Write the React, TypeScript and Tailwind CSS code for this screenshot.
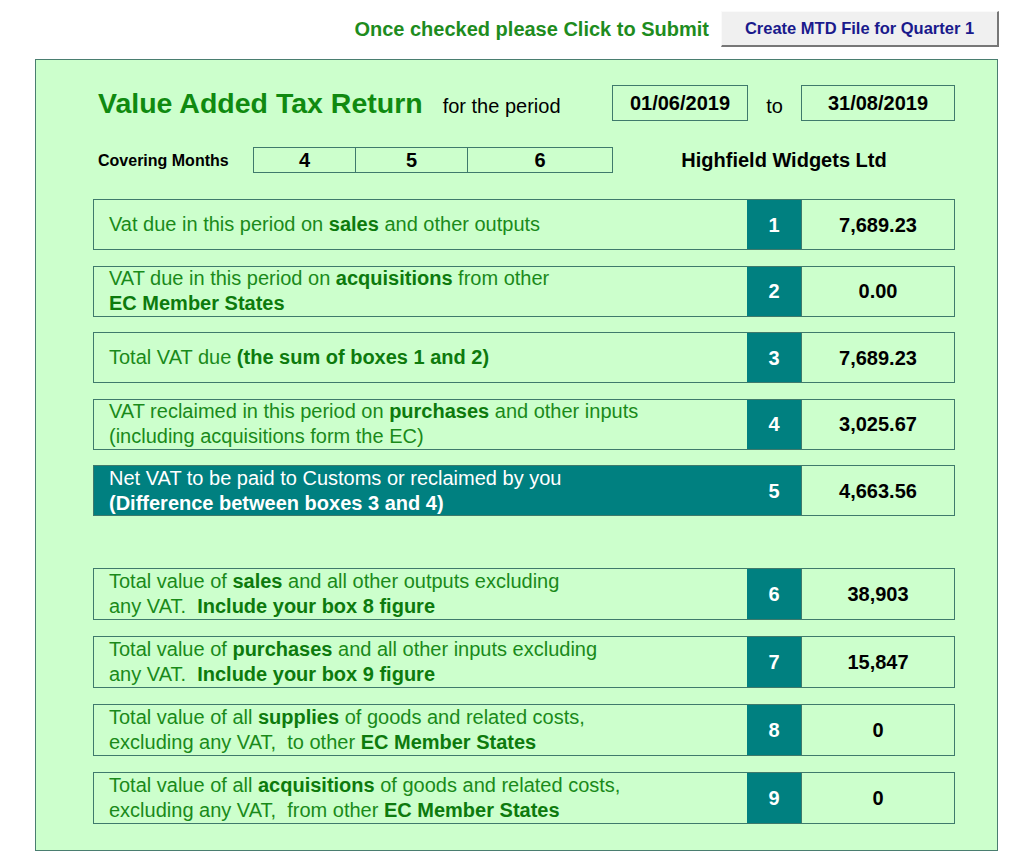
import React from 'react';

const FONT = { fontFamily: '"Liberation Sans", Arial, sans-serif' };

type Line = { text: string; bold?: boolean }[];

interface BoxRow {
  box: number;
  lines: Line[];
  value: string;
  highlight?: boolean;
}

const firstGroup: BoxRow[] = [
  {
    box: 1,
    lines: [[{ text: 'Vat due in this period on ' }, { text: 'sales', bold: true }, { text: ' and other outputs' }]],
    value: '7,689.23',
  },
  {
    box: 2,
    lines: [
      [{ text: 'VAT due in this period on ' }, { text: 'acquisitions', bold: true }, { text: ' from other' }],
      [{ text: 'EC Member States', bold: true }],
    ],
    value: '0.00',
  },
  {
    box: 3,
    lines: [[{ text: 'Total VAT due ' }, { text: '(the sum of boxes 1 and 2)', bold: true }]],
    value: '7,689.23',
  },
  {
    box: 4,
    lines: [
      [{ text: 'VAT reclaimed in this period on ' }, { text: 'purchases', bold: true }, { text: ' and other inputs' }],
      [{ text: '(including acquisitions form the EC)' }],
    ],
    value: '3,025.67',
  },
  {
    box: 5,
    lines: [
      [{ text: 'Net VAT to be paid to Customs or reclaimed by you' }],
      [{ text: '(Difference between boxes 3 and 4)', bold: true }],
    ],
    value: '4,663.56',
    highlight: true,
  },
];

const secondGroup: BoxRow[] = [
  {
    box: 6,
    lines: [
      [{ text: 'Total value of ' }, { text: 'sales', bold: true }, { text: ' and all other outputs excluding' }],
      [{ text: 'any VAT.  ' }, { text: 'Include your box 8 figure', bold: true }],
    ],
    value: '38,903',
  },
  {
    box: 7,
    lines: [
      [{ text: 'Total value of ' }, { text: 'purchases', bold: true }, { text: ' and all other inputs excluding' }],
      [{ text: 'any VAT.  ' }, { text: 'Include your box 9 figure', bold: true }],
    ],
    value: '15,847',
  },
  {
    box: 8,
    lines: [
      [{ text: 'Total value of all ' }, { text: 'supplies', bold: true }, { text: ' of goods and related costs,' }],
      [{ text: 'excluding any VAT,  to other ' }, { text: 'EC Member States', bold: true }],
    ],
    value: '0',
  },
  {
    box: 9,
    lines: [
      [{ text: 'Total value of all ' }, { text: 'acquisitions', bold: true }, { text: ' of goods and related costs,' }],
      [{ text: 'excluding any VAT,  from other ' }, { text: 'EC Member States', bold: true }],
    ],
    value: '0',
  },
];

function VatRow({ row, tall }: { row: BoxRow; tall?: boolean }) {
  return (
    <div className={`flex border border-[#3f7a6c] ${tall ? 'h-[52px]' : 'h-[51px]'}`}>
      <div
        className={`flex-1 flex flex-col justify-center pl-[15px] text-[20px] leading-[25px] ${
          row.highlight ? 'bg-[#008080] text-white' : 'text-[#1a8a1a]'
        }`}
      >
        {row.lines.map((line, i) => (
          <div key={i} className="whitespace-pre">
            {line.map((part, j) => (
              <span key={j} className={part.bold ? `font-bold ${row.highlight ? '' : 'text-[#0d7a0d]'}` : ''}>
                {part.text}
              </span>
            ))}
          </div>
        ))}
      </div>
      <div className="w-[54px] bg-[#008080] text-white font-bold text-[20px] flex items-center justify-center">
        {row.box}
      </div>
      <div className="w-[153px] border-l border-[#3f7a6c] flex items-center justify-center font-bold text-[20px] text-black">
        {row.value}
      </div>
    </div>
  );
}

export default function App() {
  return (
    <div className="w-[1028px] h-[865px] bg-white" style={FONT}>
      {/* submit bar */}
      <div className="flex items-center justify-end pt-[11px] pr-[29px] gap-[12px]">
        <span className="text-[20px] font-bold text-[#1e8c1e]">Once checked please Click to Submit</span>
        <button className="w-[278px] h-[36px] bg-[#f0f0f0] border-t border-l border-t-[#fafafa] border-l-[#fafafa] border-r-2 border-b-2 border-r-[#777] border-b-[#777] text-[16.5px] font-bold text-[#1a1a8c]">
          Create MTD File for Quarter 1
        </button>
      </div>

      {/* main panel */}
      <div className="ml-[35px] mt-[12px] w-[963px] h-[792px] bg-[#ccffcc] border border-[#4a7e70] pl-[57px] pr-[42px] pt-[25px]">
        <div className="flex items-center h-[36px]">
          <div className="flex items-baseline pl-[5px]">
            <span className="text-[28.5px] font-bold text-[#108a10]">Value Added Tax Return</span>
            <span className="ml-[20px] text-[20px] text-black">for the period</span>
          </div>
          <div className="ml-auto flex items-center">
            <div className="w-[136px] h-[36px] border border-[#3f7a6c] flex items-center justify-center font-bold text-[20px] text-black">
              01/06/2019
            </div>
            <div className="w-[53px] text-center text-[20px] text-black pt-[6px]">to</div>
            <div className="w-[154px] h-[36px] border border-[#3f7a6c] flex items-center justify-center font-bold text-[20px] text-black">
              31/08/2019
            </div>
          </div>
        </div>

        <div className="flex items-center mt-[26px] h-[26px]">
          <span className="w-[160px] pl-[5px] pt-[2px] text-[16px] font-bold text-black">Covering Months</span>
          <div className="flex h-[26px] border border-[#3f7a6c]">
            <div className="w-[101px] flex items-center justify-center font-bold text-[20px]">4</div>
            <div className="w-[112px] border-l border-[#3f7a6c] flex items-center justify-center font-bold text-[20px]">5</div>
            <div className="w-[145px] border-l border-[#3f7a6c] flex items-center justify-center font-bold text-[20px]">6</div>
          </div>
          <span className="flex-1 text-center text-[20px] font-bold text-black">Highfield Widgets Ltd</span>
        </div>

        <div className="mt-[26px] flex flex-col gap-[15.5px]">
          {firstGroup.map((row) => (
            <VatRow key={row.box} row={row} />
          ))}
        </div>

        <div className="mt-[52px] flex flex-col gap-[16px]">
          {secondGroup.map((row) => (
            <VatRow key={row.box} row={row} tall />
          ))}
        </div>
      </div>
    </div>
  );
}
